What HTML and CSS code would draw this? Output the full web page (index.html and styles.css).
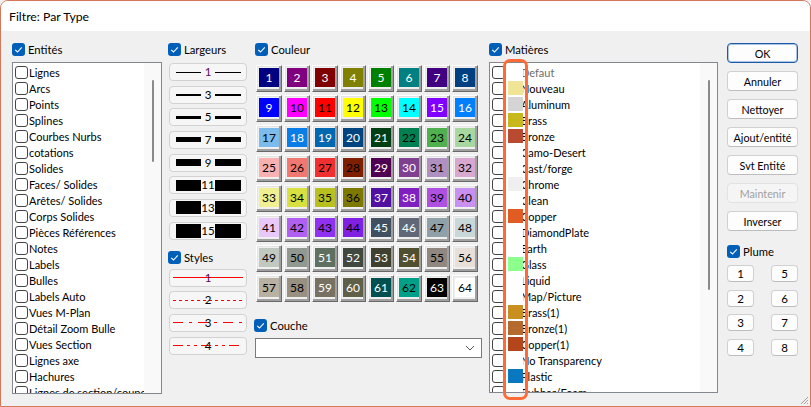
FILE: index.html
```html
<!DOCTYPE html>
<html lang="fr">
<head>
<meta charset="utf-8">
<title>Filtre: Par Type</title>
<link rel="stylesheet" href="styles.css">
</head>
<body>
<div class="window">
  <div class="titlebar">Filtre: Par Type</div>
  <div class="content">

    <div class="col col-ent">
      <div class="hdr"><span class="cb on"><svg viewBox="0 0 13 13"><path d="M3.2 6.8 L5.5 9 L9.8 4.3"/></svg></span>Entités</div>
      <div class="list list-ent">
        <div class="items">
          <div class="row"><span class="cb"></span><span class="txt">Lignes</span></div>
          <div class="row"><span class="cb"></span><span class="txt">Arcs</span></div>
          <div class="row"><span class="cb"></span><span class="txt">Points</span></div>
          <div class="row"><span class="cb"></span><span class="txt">Splines</span></div>
          <div class="row"><span class="cb"></span><span class="txt">Courbes Nurbs</span></div>
          <div class="row"><span class="cb"></span><span class="txt">cotations</span></div>
          <div class="row"><span class="cb"></span><span class="txt">Solides</span></div>
          <div class="row"><span class="cb"></span><span class="txt">Faces/ Solides</span></div>
          <div class="row"><span class="cb"></span><span class="txt">Arêtes/ Solides</span></div>
          <div class="row"><span class="cb"></span><span class="txt">Corps Solides</span></div>
          <div class="row"><span class="cb"></span><span class="txt">Pièces Références</span></div>
          <div class="row"><span class="cb"></span><span class="txt">Notes</span></div>
          <div class="row"><span class="cb"></span><span class="txt">Labels</span></div>
          <div class="row"><span class="cb"></span><span class="txt">Bulles</span></div>
          <div class="row"><span class="cb"></span><span class="txt">Labels Auto</span></div>
          <div class="row"><span class="cb"></span><span class="txt">Vues M-Plan</span></div>
          <div class="row"><span class="cb"></span><span class="txt">Détail Zoom Bulle</span></div>
          <div class="row"><span class="cb"></span><span class="txt">Vues Section</span></div>
          <div class="row"><span class="cb"></span><span class="txt">Lignes axe</span></div>
          <div class="row"><span class="cb"></span><span class="txt">Hachures</span></div>
          <div class="row"><span class="cb"></span><span class="txt">Lignes de section/coupe</span></div>
        </div>
        <div class="sbar"><div class="thumb thumb-ent"></div></div>
      </div>
    </div>

    <div class="col col-wid">
      <div class="hdr"><span class="cb on"><svg viewBox="0 0 13 13"><path d="M3.2 6.8 L5.5 9 L9.8 4.3"/></svg></span>Largeurs</div>
      <div class="wbtns">
        <div class="wbtn w1"><span class="bar"></span><span class="num purple">1</span><span class="bar bar-r"></span></div>
        <div class="wbtn w3"><span class="bar"></span><span class="num">3</span><span class="bar bar-r"></span></div>
        <div class="wbtn w5"><span class="bar"></span><span class="num">5</span><span class="bar bar-r"></span></div>
        <div class="wbtn w7"><span class="bar"></span><span class="num">7</span><span class="bar bar-r"></span></div>
        <div class="wbtn w9"><span class="bar"></span><span class="num">9</span><span class="bar bar-r"></span></div>
        <div class="wbtn w11"><span class="bar"></span><span class="num">11</span><span class="bar bar-r"></span></div>
        <div class="wbtn w13"><span class="bar"></span><span class="num">13</span><span class="bar bar-r"></span></div>
        <div class="wbtn w15"><span class="bar"></span><span class="num">15</span><span class="bar bar-r"></span></div>
      </div>
      <div class="hdr hdr-styles"><span class="cb on"><svg viewBox="0 0 13 13"><path d="M3.2 6.8 L5.5 9 L9.8 4.3"/></svg></span>Styles</div>
      <div class="sbtns">
        <div class="sbtn"><svg class="sline" viewBox="0 0 70 3"><line x1="0" y1="1.5" x2="70" y2="1.5"/></svg><span class="snum purple">1</span></div>
        <div class="sbtn"><svg class="sline" viewBox="0 0 70 3"><line class="d2" x1="0" y1="1.5" x2="70" y2="1.5"/></svg><span class="snum">2</span></div>
        <div class="sbtn"><svg class="sline" viewBox="0 0 70 3"><line class="d3" x1="0" y1="1.5" x2="70" y2="1.5"/></svg><span class="snum">3</span></div>
        <div class="sbtn"><svg class="sline" viewBox="0 0 70 3"><line class="d4" x1="0" y1="1.5" x2="70" y2="1.5"/></svg><span class="snum">4</span></div>
      </div>
    </div>

    <div class="col col-col">
      <div class="hdr"><span class="cb on"><svg viewBox="0 0 13 13"><path d="M3.2 6.8 L5.5 9 L9.8 4.3"/></svg></span>Couleur</div>
      <div class="grid">
        <div class="cell"><span class="fill lt" style="background:#000080">1</span></div>
        <div class="cell"><span class="fill lt" style="background:#800080">2</span></div>
        <div class="cell"><span class="fill lt" style="background:#800000">3</span></div>
        <div class="cell"><span class="fill lt" style="background:#808000">4</span></div>
        <div class="cell"><span class="fill lt" style="background:#008000">5</span></div>
        <div class="cell"><span class="fill lt" style="background:#008080">6</span></div>
        <div class="cell"><span class="fill lt" style="background:#400080">7</span></div>
        <div class="cell"><span class="fill lt" style="background:#004080">8</span></div>

        <div class="cell"><span class="fill lt" style="background:#0000ff">9</span></div>
        <div class="cell"><span class="fill" style="background:#ff00ff">10</span></div>
        <div class="cell"><span class="fill" style="background:#ff0000">11</span></div>
        <div class="cell"><span class="fill" style="background:#ffff00">12</span></div>
        <div class="cell"><span class="fill" style="background:#00ff00">13</span></div>
        <div class="cell"><span class="fill" style="background:#00ffff">14</span></div>
        <div class="cell"><span class="fill lt" style="background:#8000ff">15</span></div>
        <div class="cell"><span class="fill lt" style="background:#0080ff">16</span></div>

        <div class="cell"><span class="fill" style="background:#7cbcec">17</span></div>
        <div class="cell"><span class="fill lt" style="background:#0a7ee6">18</span></div>
        <div class="cell"><span class="fill lt" style="background:#0068b0">19</span></div>
        <div class="cell"><span class="fill lt" style="background:#004480">20</span></div>
        <div class="cell"><span class="fill lt" style="background:#003e14">21</span></div>
        <div class="cell"><span class="fill" style="background:#008050">22</span></div>
        <div class="cell"><span class="fill" style="background:#50b050">23</span></div>
        <div class="cell"><span class="fill" style="background:#a8d8a0">24</span></div>

        <div class="cell"><span class="fill" style="background:#f8b0b0">25</span></div>
        <div class="cell"><span class="fill" style="background:#f07870">26</span></div>
        <div class="cell"><span class="fill" style="background:#f03030">27</span></div>
        <div class="cell"><span class="fill" style="background:#7e2000">28</span></div>
        <div class="cell"><span class="fill lt" style="background:#500050">29</span></div>
        <div class="cell"><span class="fill lt" style="background:#804090">30</span></div>
        <div class="cell"><span class="fill" style="background:#b090c0">31</span></div>
        <div class="cell"><span class="fill" style="background:#d8a8d0">32</span></div>

        <div class="cell"><span class="fill" style="background:#f0f090">33</span></div>
        <div class="cell"><span class="fill" style="background:#d8e040">34</span></div>
        <div class="cell"><span class="fill" style="background:#b8c020">35</span></div>
        <div class="cell"><span class="fill" style="background:#7c7800">36</span></div>
        <div class="cell"><span class="fill lt" style="background:#5010a0">37</span></div>
        <div class="cell"><span class="fill lt" style="background:#8020c0">38</span></div>
        <div class="cell"><span class="fill" style="background:#b050e0">39</span></div>
        <div class="cell"><span class="fill" style="background:#c890f0">40</span></div>

        <div class="cell"><span class="fill" style="background:#e8c8f8">41</span></div>
        <div class="cell"><span class="fill" style="background:#b060f0">42</span></div>
        <div class="cell"><span class="fill" style="background:#9030f0">43</span></div>
        <div class="cell"><span class="fill" style="background:#8020e0">44</span></div>
        <div class="cell"><span class="fill lt" style="background:#405060">45</span></div>
        <div class="cell"><span class="fill lt" style="background:#606878">46</span></div>
        <div class="cell"><span class="fill" style="background:#90a0a8">47</span></div>
        <div class="cell"><span class="fill" style="background:#c8d8d8">48</span></div>

        <div class="cell"><span class="fill" style="background:#c0c8c0">49</span></div>
        <div class="cell"><span class="fill" style="background:#909890">50</span></div>
        <div class="cell"><span class="fill lt" style="background:#607060">51</span></div>
        <div class="cell"><span class="fill lt" style="background:#404840">52</span></div>
        <div class="cell"><span class="fill lt" style="background:#404030">53</span></div>
        <div class="cell"><span class="fill lt" style="background:#505030">54</span></div>
        <div class="cell"><span class="fill" style="background:#908880">55</span></div>
        <div class="cell"><span class="fill" style="background:#e8e0d8">56</span></div>

        <div class="cell"><span class="fill" style="background:#b8b0a0">57</span></div>
        <div class="cell"><span class="fill" style="background:#989080">58</span></div>
        <div class="cell"><span class="fill lt" style="background:#787060">59</span></div>
        <div class="cell"><span class="fill lt" style="background:#606048">60</span></div>
        <div class="cell"><span class="fill lt" style="background:#005050">61</span></div>
        <div class="cell"><span class="fill" style="background:#00a088">62</span></div>
        <div class="cell"><span class="fill lt" style="background:#000000">63</span></div>
        <div class="cell"><span class="fill" style="background:#ffffff">64</span></div>
      </div>
      <div class="hdr hdr-couche"><span class="cb on"><svg viewBox="0 0 13 13"><path d="M3.2 6.8 L5.5 9 L9.8 4.3"/></svg></span>Couche</div>
      <div class="combo"><span class="combo-val"></span><svg class="chev" viewBox="0 0 10 6"><path d="M1 1 L5 5 L9 1"/></svg></div>
    </div>

    <div class="col col-mat">
      <div class="hdr"><span class="cb on"><svg viewBox="0 0 13 13"><path d="M3.2 6.8 L5.5 9 L9.8 4.3"/></svg></span>Matières</div>
      <div class="list list-mat">
        <div class="items">
          <div class="row mrow"><span class="cb"></span><span class="sw"></span><span class="txt gray">Defaut</span></div>
          <div class="row mrow"><span class="cb"></span><span class="sw"><i style="background:#f0e496"></i></span><span class="txt">Nouveau</span></div>
          <div class="row mrow"><span class="cb"></span><span class="sw"><i style="background:#d4d4d4"></i></span><span class="txt">Aluminum</span></div>
          <div class="row mrow"><span class="cb"></span><span class="sw"><i style="background:#c8b81c"></i></span><span class="txt">Brass</span></div>
          <div class="row mrow"><span class="cb"></span><span class="sw"><i style="background:#b84a32"></i></span><span class="txt">Bronze</span></div>
          <div class="row mrow"><span class="cb"></span><span class="sw"></span><span class="txt">Camo-Desert</span></div>
          <div class="row mrow"><span class="cb"></span><span class="sw"></span><span class="txt">Cast/forge</span></div>
          <div class="row mrow"><span class="cb"></span><span class="sw"><i style="background:#efefef"></i></span><span class="txt">Chrome</span></div>
          <div class="row mrow"><span class="cb"></span><span class="sw"></span><span class="txt">Clean</span></div>
          <div class="row mrow"><span class="cb"></span><span class="sw"><i style="background:#e05c22"></i></span><span class="txt">Copper</span></div>
          <div class="row mrow"><span class="cb"></span><span class="sw"></span><span class="txt">DiamondPlate</span></div>
          <div class="row mrow"><span class="cb"></span><span class="sw"></span><span class="txt">Earth</span></div>
          <div class="row mrow"><span class="cb"></span><span class="sw"><i style="background:#8cff8c"></i></span><span class="txt">Glass</span></div>
          <div class="row mrow"><span class="cb"></span><span class="sw"></span><span class="txt">Liquid</span></div>
          <div class="row mrow"><span class="cb"></span><span class="sw"></span><span class="txt">Map/Picture</span></div>
          <div class="row mrow"><span class="cb"></span><span class="sw"><i style="background:#c89020"></i></span><span class="txt">Brass(1)</span></div>
          <div class="row mrow"><span class="cb"></span><span class="sw"><i style="background:#b56a2d"></i></span><span class="txt">Bronze(1)</span></div>
          <div class="row mrow"><span class="cb"></span><span class="sw"><i style="background:#b5451a"></i></span><span class="txt">Copper(1)</span></div>
          <div class="row mrow"><span class="cb"></span><span class="sw"></span><span class="txt">No Transparency</span></div>
          <div class="row mrow"><span class="cb"></span><span class="sw"><i style="background:#0a78c0"></i></span><span class="txt">Plastic</span></div>
          <div class="row mrow"><span class="cb"></span><span class="sw"></span><span class="txt">Rubber/Foam</span></div>
        </div>
        <div class="sbar"><div class="thumb thumb-mat"></div></div>
      </div>
    </div>

    <div class="col col-btn">
      <div class="btn ok">OK</div>
      <div class="btn">Annuler</div>
      <div class="btn">Nettoyer</div>
      <div class="btn">Ajout/entité</div>
      <div class="btn">Svt Entité</div>
      <div class="btn disabled">Maintenir</div>
      <div class="btn last">Inverser</div>
      <div class="hdr hdr-plume"><span class="cb on"><svg viewBox="0 0 13 13"><path d="M3.2 6.8 L5.5 9 L9.8 4.3"/></svg></span>Plume</div>
      <div class="pens">
        <div class="pen">1</div><div class="pen">5</div>
        <div class="pen">2</div><div class="pen">6</div>
        <div class="pen">3</div><div class="pen">7</div>
        <div class="pen">4</div><div class="pen">8</div>
      </div>
    </div>

  </div>
  <div class="annot"></div>
  <svg class="grip" viewBox="0 0 10 10"><path d="M9 2 L2 9 M9 5 L5 9 M9 8 L8 9"/></svg>
</div>
</body>
</html>
```

FILE: styles.css
```css
* { box-sizing: border-box; }
html, body { margin: 0; padding: 0; }
body {
  width: 811px;
  height: 407px;
  overflow: hidden;
  background: #f0f0f0;
  font-family: Lato, "Open Sans", sans-serif;
  font-size: 10.75px;
  color: #000;
}
.window {
  position: relative;
  width: 811px;
  height: 407px;
  border: 1px solid #d4785b;
  border-radius: 8px 8px 0 0;
  background: #f0f0f0;
  overflow: hidden;
}
.titlebar {
  height: 30px;
  background: #fff;
  padding-left: 8px;
  display: flex;
  align-items: center;
  font-size: 12.25px;
}
.content {
  display: flex;
  align-items: flex-start;
  padding: 12px 0 0 11px;
}
.col { display: flex; flex-direction: column; }
.col-ent { width: 150px; }
.col-wid { width: 80px; margin-left: 6px; }
.col-col { width: 228px; margin-left: 7px; }
.col-mat { width: 229px; margin-left: 6px; }
.col-btn { width: 71px; margin-left: 9px; }

/* headers with checked checkbox */
.hdr {
  display: flex;
  align-items: center;
  height: 13px;
  white-space: nowrap;
  font-size: 11.25px;
}
.cb {
  flex: none;
  width: 13px;
  height: 13px;
  border: 1px solid #444;
  border-radius: 3px;
  background: #fff;
}
.cb.on {
  border: none;
  background: #005fb8;
  margin-right: 3px;
  display: flex;
}
.cb.on svg { width: 13px; height: 13px; }
.cb.on path { fill: none; stroke: #fff; stroke-width: 1.1; }

/* list boxes */
.list {
  display: flex;
  border: 1px solid #828790;
  background: #fff;
  overflow: hidden;
}
.list-ent { margin-top: 6px; height: 332px; }
.list-mat { margin-top: 6px; height: 331px; }
.items { flex: 1; padding-top: 1px; overflow: hidden; }
.row {
  display: flex;
  align-items: center;
  height: 16px;
  white-space: nowrap;
  font-size: 11px;
}
.row .cb { margin-left: 2px; }
.row .txt { margin-left: 1px; }
.mrow { position: relative; }
.mrow .txt { margin-left: 16px; }
.txt.gray { color: #6d6d6d; }
.sw {
  position: absolute;
  left: 15px;
  top: 0;
  width: 18px;
  height: 16px;
  background: #fff;
}
.sw i {
  display: block;
  margin: 1px 0 0 3px;
  width: 15px;
  height: 14px;
}
.sbar {
  flex: none;
  width: 17px;
  background: #f9f9f9;
  position: relative;
}
.thumb {
  width: 2px;
  margin-left: 8px;
  background: #8a8a8a;
  border-radius: 1px;
}
.thumb-ent { margin-top: 17px; height: 82px; }
.thumb-mat { margin-top: 17px; height: 210px; }

/* widths */
.wbtns {
  display: flex;
  flex-direction: column;
  gap: 4.67px;
  margin: 7px 0 0 1px;
}
.wbtn, .sbtn {
  width: 78px;
  height: 18px;
  border: 1px solid #d2d2d2;
  border-radius: 4px;
  background: #f6f6f6;
}
.wbtn {
  display: flex;
  align-items: center;
  padding-left: 6px;
}
.bar { width: 25px; background: #000; height: 1px; }
.bar-r { width: 26px; }
.num { width: 14px; text-align: center; line-height: 14px; font-size: 11.5px; }
.purple { color: #5a0a5a; }
.w3 .bar { height: 2px; }
.w5 .bar { height: 3px; }
.w7 .bar { height: 5px; }
.w9 .bar { height: 7px; }
.w11 .bar { height: 11px; }
.w13 .bar { height: 13px; }
.w15 .bar { height: 14px; }

/* styles */
.hdr-styles { margin-top: 11px; }
.sbtns {
  display: flex;
  flex-direction: column;
  gap: 4.67px;
  margin: 5px 0 0 1px;
}
.sbtn {
  display: grid;
  place-items: center;
}
.sline, .snum { grid-area: 1 / 1; }
.sline { width: 70px; height: 3px; display: block; }
.sline line { stroke: #ff0000; stroke-width: 1; }
.sline .d2 { stroke-dasharray: 3 3; }
.sline .d3 { stroke-dasharray: 10 6 3 6; }
.sline .d4 { stroke-dasharray: 10 4 3 4 3 4; }
.snum { line-height: 14px; font-size: 11.5px; }

/* colour grid */
.grid {
  display: grid;
  grid-template-columns: repeat(8, 26px);
  grid-auto-rows: 27px;
  column-gap: 2px;
  row-gap: 3px;
  margin: 9px 0 0 1px;
}
.cell {
  border-top: 1px solid #fff;
  border-left: 1px solid #fff;
  border-right: 1px solid #696969;
  border-bottom: 1px solid #696969;
  box-shadow: inset -2px -2px 0 #a0a0a0, inset 1px 1px 0 #e3e3e3;
  padding: 2px 2px 4px 2px;
  background: #f0f0f0;
}
.fill {
  display: flex;
  align-items: center;
  justify-content: center;
  width: 20px;
  height: 19px;
  font-size: 12px;
  color: #000;
}
.fill.lt { color: #fff; }

/* couche */
.hdr-couche { margin: 17px 0 0 -1px; }
.combo {
  margin-top: 6px;
  width: 227px;
  height: 20px;
  border: 1px solid #7a7a7a;
  background: #fff;
  display: flex;
  align-items: center;
  justify-content: flex-end;
  padding-right: 6px;
}
.chev { width: 10px; height: 6px; }
.chev path { fill: none; stroke: #555; stroke-width: 1; }

/* right buttons */
.btn {
  height: 20px;
  border: 1px solid #d0d0d0;
  border-bottom-color: #bdbdbd;
  border-radius: 4px;
  background: #fdfdfd;
  margin-bottom: 8px;
  display: flex;
  align-items: center;
  justify-content: center;
  white-space: nowrap;
}
.btn.last { margin-bottom: 0; }
.btn.ok { border: 1px solid #1a5aa8; box-shadow: inset 0 0 0 1px rgba(26, 90, 168, 0.35); }
.btn.disabled { color: #a0a0a0; background: #f5f5f5; border-color: #e2e2e2; }
.hdr-plume { margin-top: 14px; }
.pens {
  display: grid;
  grid-template-columns: 27px 27px;
  justify-content: space-between;
  grid-auto-rows: 17px;
  row-gap: 7.67px;
  margin-top: 7px;
}
.pen {
  border: 1px solid #d0d0d0;
  border-bottom-color: #bdbdbd;
  border-radius: 4px;
  background: #fdfdfd;
  display: flex;
  align-items: center;
  justify-content: center;
  font-size: 11.5px;
}

/* overlays */
.annot {
  position: absolute;
  left: 501.5px;
  top: 58px;
  width: 25.5px;
  height: 341px;
  border: 3px solid #ff6a36;
  border-radius: 7px;
}
.grip {
  position: absolute;
  right: 1px;
  bottom: 1px;
  width: 10px;
  height: 10px;
}
.grip path { stroke: #a0a0a0; stroke-width: 1; fill: none; }
```
